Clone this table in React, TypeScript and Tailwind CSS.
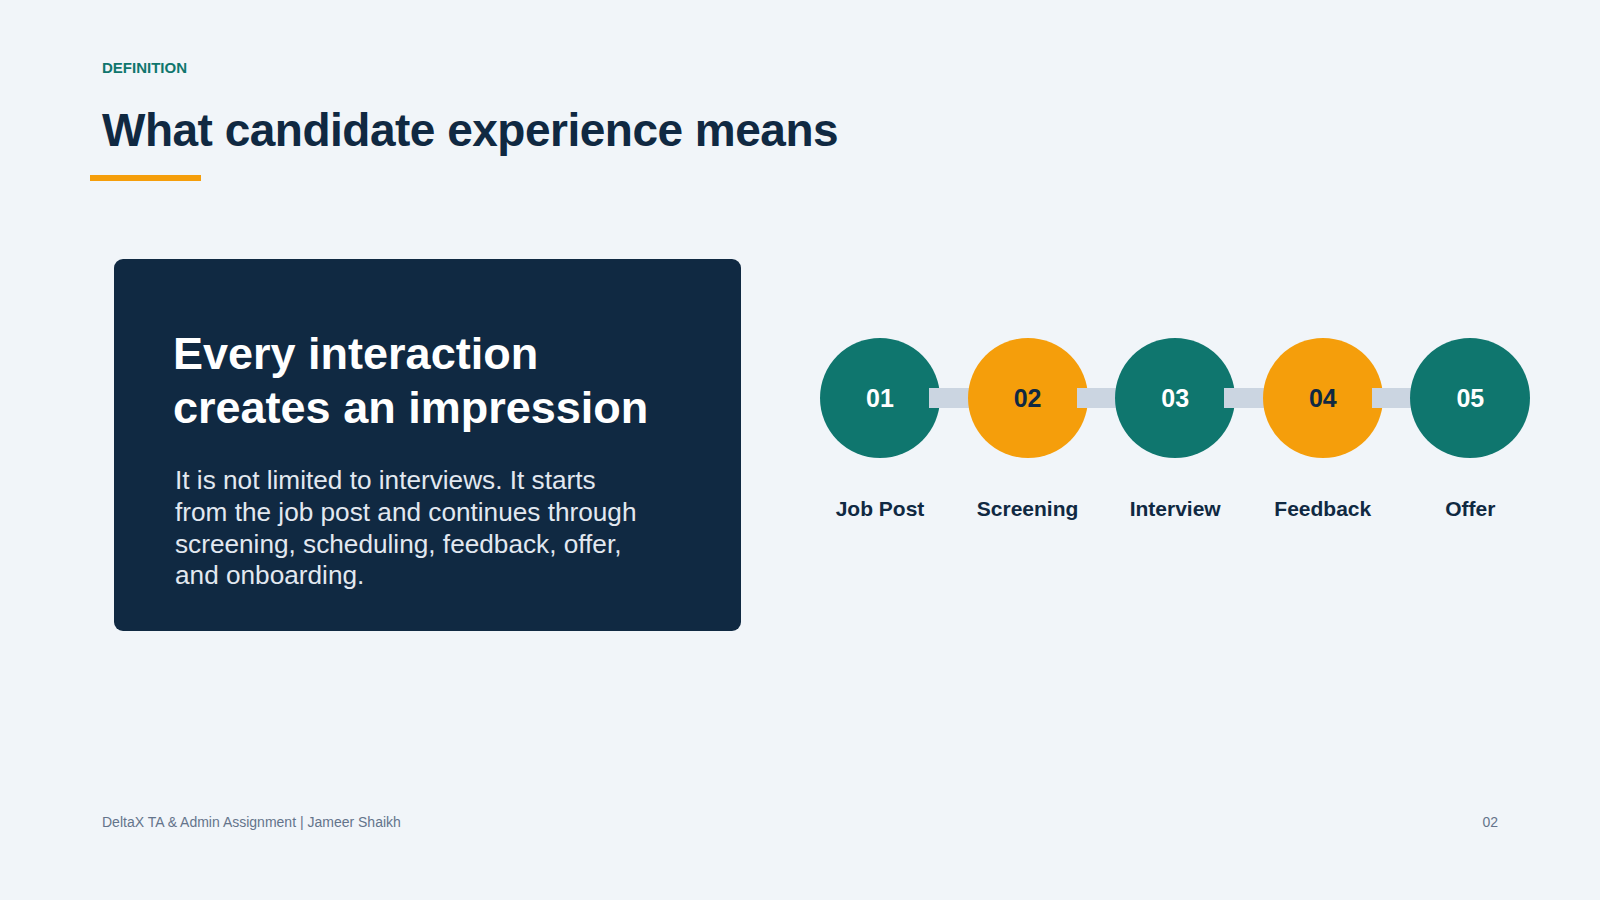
import React from 'react';

const steps = [
  { num: '01', label: 'Job Post', tone: 'teal' },
  { num: '02', label: 'Screening', tone: 'amber' },
  { num: '03', label: 'Interview', tone: 'teal' },
  { num: '04', label: 'Feedback', tone: 'amber' },
  { num: '05', label: 'Offer', tone: 'teal' },
];

const StepRow: React.FC = () => (
  <div className="flex gap-[27.6px]">
    {steps.map((step, i) => (
      <div key={step.num} className="relative flex w-[120px] flex-col items-center">
        <div
          className={
            step.tone === 'teal'
              ? 'relative flex h-[120px] w-[120px] items-center justify-center rounded-full bg-[#0f766e] text-white'
              : 'relative flex h-[120px] w-[120px] items-center justify-center rounded-full bg-[#f59e0b] text-[#102942]'
          }
        >
          <span className="text-[25px] font-bold leading-none">{step.num}</span>
        </div>
        {/* connector sits over this circle, under the next one */}
        {i < steps.length - 1 && (
          <div className="absolute left-[109px] top-[50px] h-[20px] w-[50px] bg-[#cbd5e1]" />
        )}
        <div className="mt-[38px] text-[21px] font-bold leading-[25px] text-[#102942] whitespace-nowrap">
          {step.label}
        </div>
      </div>
    ))}
  </div>
);

export default function App() {
  return (
    <div
      className="flex h-[900px] w-[1600px] flex-col bg-[#f1f5f9]"
      style={{ fontFamily: '"Liberation Sans", Arial, sans-serif' }}
    >
      {/* Header */}
      <div className="px-[102px] pt-[58.5px]">
        <div className="text-[15px] font-bold leading-[18px] text-[#0f766e]">DEFINITION</div>
        <h1 className="mt-[26.3px] text-[46px] font-bold leading-[55.2px] tracking-[-0.5px] text-[#102942]">
          What candidate experience means
        </h1>
        <div className="-ml-[12px] mt-[17.3px] h-[6px] w-[111px] bg-[#f59e0b]" />
      </div>

      {/* Content */}
      <div className="mt-[77.7px] flex items-start pl-[114px]">
        <div className="h-[372px] w-[627px] rounded-[9px] bg-[#102942] pl-[59px] pr-[50px] pt-[67.6px]">
          <h2 className="text-[45px] font-bold leading-[54px] text-white">
            Every interaction creates an impression
          </h2>
          <p className="ml-[2px] mt-[30.8px] max-w-[475px] text-[26.2px] leading-[31.7px] text-[#e2e8f0]">
            It is not limited to interviews. It starts from the job post and continues through
            screening, scheduling, feedback, offer, and onboarding.
          </p>
        </div>

        <div className="ml-[79px] pt-[79.3px]">
          <StepRow />
        </div>
      </div>

      {/* Footer */}
      <div className="mt-auto flex items-center justify-between pb-[68px] pl-[102px] pr-[102px] text-[14px] leading-[20px] text-[#64748b]">
        <span>DeltaX TA &amp; Admin Assignment | Jameer Shaikh</span>
        <span>02</span>
      </div>
    </div>
  );
}
